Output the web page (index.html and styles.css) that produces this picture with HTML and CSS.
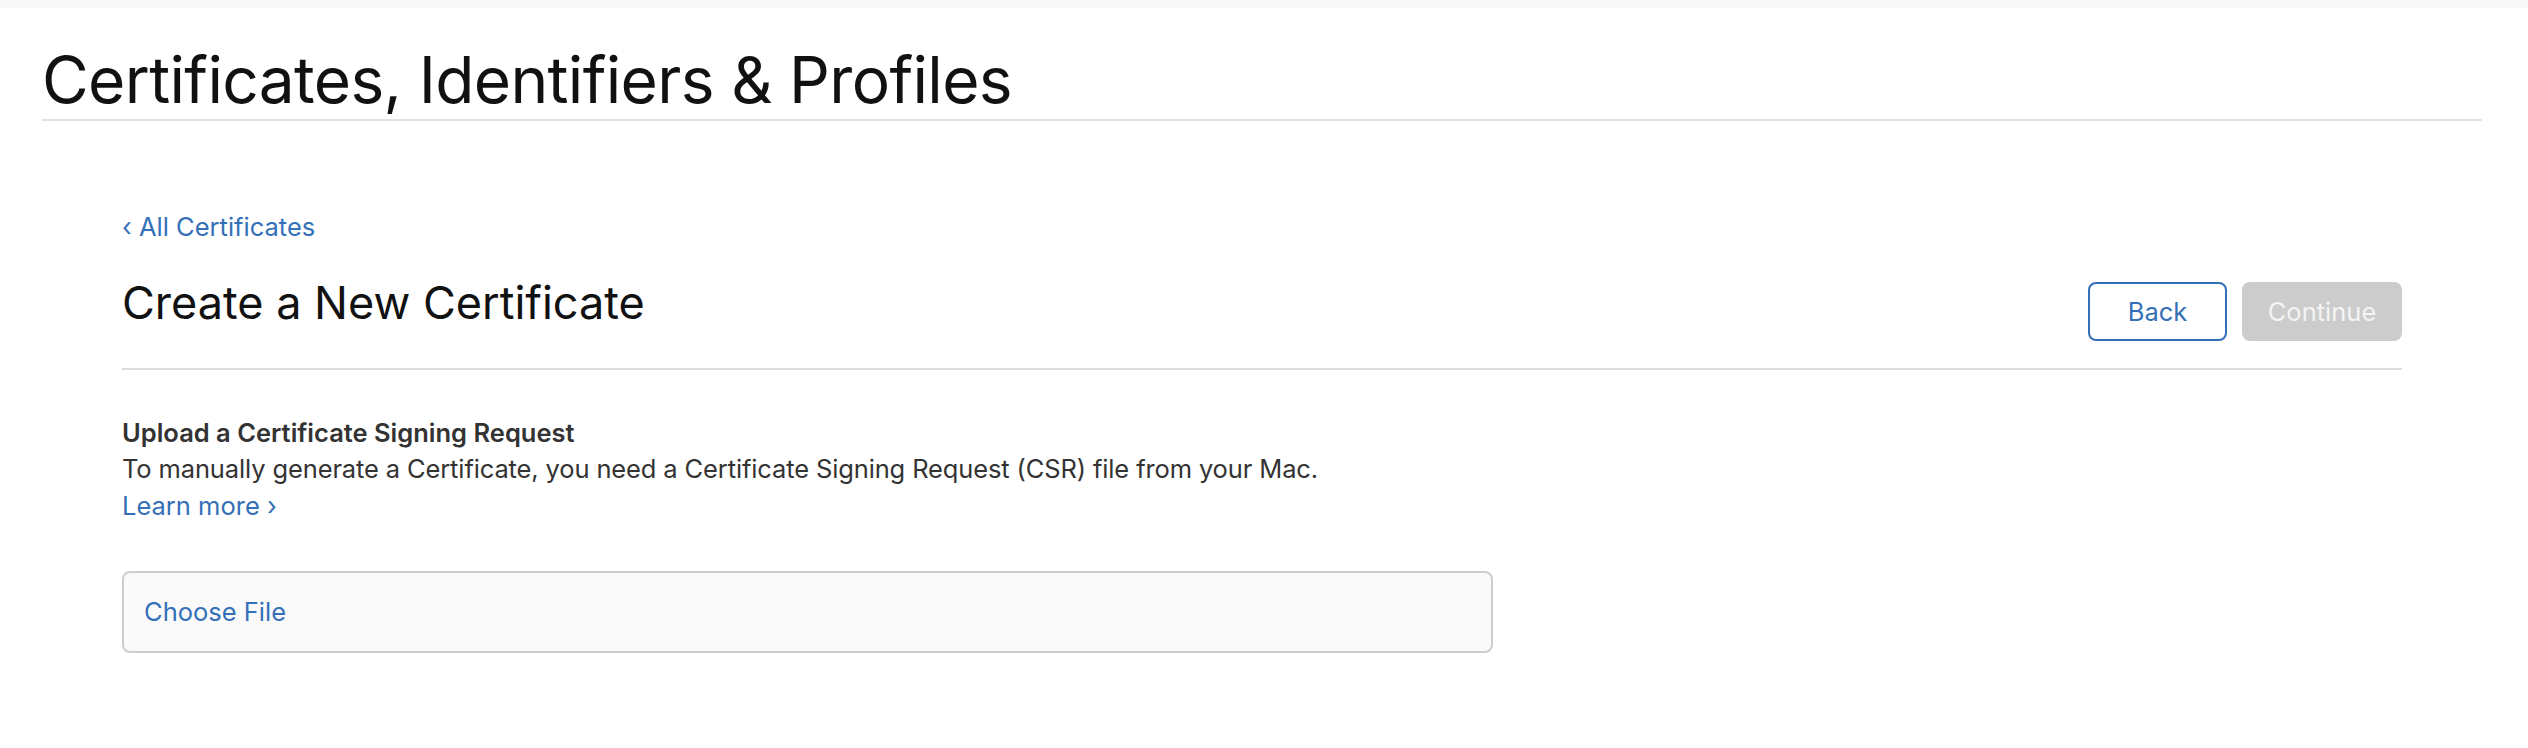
FILE: index.html
```html
<!DOCTYPE html>
<html lang="en">
<head>
<meta charset="utf-8">
<title>Certificates, Identifiers &amp; Profiles</title>
<link rel="stylesheet" href="styles.css">
</head>
<body>
<div class="topbar"></div>
<header class="page-header">
  <h1 class="page-title">Certificates, Identifiers &amp; Profiles</h1>
</header>
<main class="content">
  <a class="breadcrumb" href="#">&lsaquo; All Certificates</a>
  <div class="title-row">
    <h2 class="section-title">Create a New Certificate</h2>
    <div class="actions">
      <button class="btn btn-back" type="button">Back</button>
      <button class="btn btn-continue" type="button" disabled>Continue</button>
    </div>
  </div>
  <section class="upload">
    <h3 class="upload-title">Upload a Certificate Signing Request</h3>
    <p class="upload-desc">To manually generate a Certificate, you need a Certificate Signing Request (CSR) file from your Mac.</p>
    <a class="learn-more" href="#">Learn more &rsaquo;</a>
    <div class="file-box">
      <span class="choose-file">Choose File</span>
    </div>
  </section>
</main>
</body>
</html>
```
FILE: styles.css
```css
* { box-sizing: border-box; }
html, body { margin: 0; padding: 0; background: #fff; }
body {
  font-family: Inter, "Noto Sans", "Liberation Sans", sans-serif;
  color: #333;
  font-size: 25.5px;
  line-height: 37.5px;
}
.topbar {
  height: 8px;
  background: #f8f8f8;
}
.page-header {
  margin: 0 46px 0 42px;
  padding-top: 37px;
  padding-bottom: 4px;
  border-bottom: 2px solid #e3e3e3;
}
.page-title {
  margin: 0;
  font-size: 64px;
  line-height: 70px;
  font-weight: 400;
  color: #111;
  letter-spacing: -0.65px;
}
.content {
  margin: 0 126px 0 122px;
  padding-top: 87px;
}
.breadcrumb {
  display: block;
  color: #3470b8;
  text-decoration: none;
}
.title-row {
  display: flex;
  justify-content: space-between;
  align-items: flex-start;
  margin-top: 31px;
  padding-bottom: 27px;
  border-bottom: 2px solid #dedede;
}
.section-title {
  margin: 0;
  font-size: 45px;
  line-height: 52px;
  font-weight: 400;
  color: #111;
}
.actions {
  display: flex;
  gap: 15px;
  margin-top: 5px;
}
.btn {
  height: 59px;
  border-radius: 8px;
  font-family: inherit;
  font-size: 25.5px;
  padding: 0 20px;
  cursor: pointer;
}
.btn-back {
  min-width: 139px;
  background: #fff;
  border: 2px solid #3470b8;
  color: #3470b8;
}
.btn-continue {
  min-width: 160px;
  background: #cccccc;
  border: 2px solid #cccccc;
  color: #f4f4f4;
}
.upload {
  padding-top: 45px;
}
.upload-title {
  margin: 0;
  font-size: 25.5px;
  line-height: 36.5px;
  font-weight: 600;
  color: #333;
}
.upload-desc {
  margin: 0;
  line-height: 36.5px;
  letter-spacing: -0.13px;
}
.learn-more {
  display: block;
  line-height: 36.5px;
  color: #3470b8;
  text-decoration: none;
}
.file-box {
  width: 60.15%;
  height: 82px;
  margin-top: 47px;
  display: flex;
  align-items: center;
  padding-left: 20px;
  background: #fafafa;
  border: 2px solid #cdcdcd;
  border-radius: 8px;
}
.choose-file {
  color: #3470b8;
}
```
